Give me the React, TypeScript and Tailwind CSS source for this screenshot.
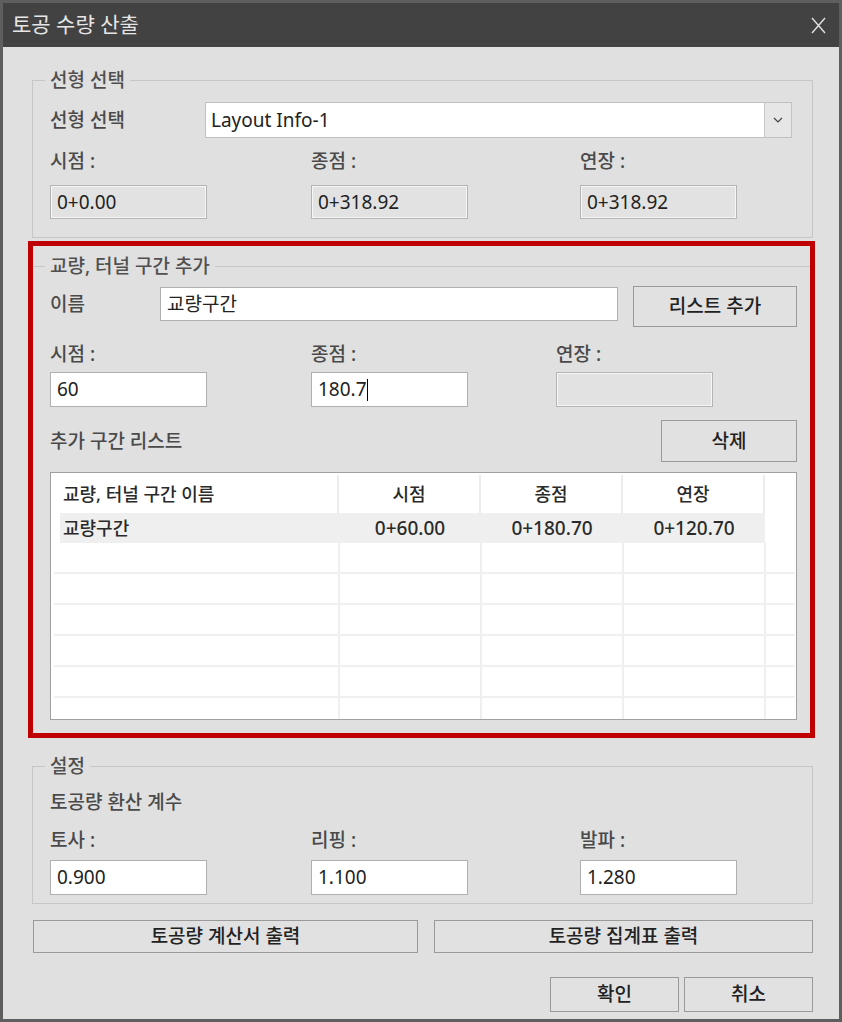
import React from 'react';

const labelCls = 'text-[19px] leading-[22px] font-medium text-[#4a4a4a]';

function Legend({ children }: { children: React.ReactNode }) {
  return <legend className="-ml-[5px] px-[5px] text-[19px] leading-[22px] font-medium text-[#505050]">{children}</legend>;
}

function Box({ value, readOnly, w = 'w-[157px]', h = 'h-[35px]', caret }: { value: string; readOnly?: boolean; w?: string; h?: string; caret?: boolean }) {
  return (
    <div
      className={`${w} ${h} flex items-center pl-[6px] text-[19px] text-[#222222] border ${
        readOnly
          ? 'bg-[#e2e2e2] border-[#b4b4b4] shadow-[inset_0_0_0_1px_#f6f6f6]'
          : 'bg-white border-[#b0b0b0]'
      }`}
    >
      <span>{value}</span>
      {caret && <span className="w-px h-[22px] bg-black" />}
    </div>
  );
}

function Btn({ children, w, h }: { children: React.ReactNode; w: string; h: string }) {
  return (
    <button className={`${w} ${h} flex items-center justify-center bg-[#e1e1e1] border border-[#9a9a9a] text-[19px] font-medium text-[#222222]`}>
      {children}
    </button>
  );
}

const emptyRows = [0, 1, 2, 3, 4, 5];

export default function App() {
  return (
    <div className="w-[842px] h-[1022px] border-[3px] border-[#5e5e5e] bg-[#e0e0e0] flex flex-col font-['Noto_Sans','Noto_Sans_CJK_KR',sans-serif]">
      {/* title bar */}
      <div className="h-[44px] bg-[#424242] flex items-center justify-between pl-[9px] pr-[13px] shrink-0">
        <span className="text-[21px] text-[#e6e6e6]">토공 수량 산출</span>
        <svg width="15" height="17" viewBox="0 0 15 17">
          <path d="M1 1L14 16M14 1L1 16" stroke="#e0e0e0" strokeWidth="1.4" fill="none" />
        </svg>
      </div>

      {/* 선형 선택 */}
      <fieldset className="mt-[22px] ml-[29px] mr-[26px] border border-[#c6c6c6] px-[17px] pb-[18px]">
        <Legend>선형 선택</Legend>
        <div className="mt-[11px] flex items-center">
          <span className={`${labelCls} w-[155px]`}>선형 선택</span>
          <div className="w-[587px] h-[36px] flex border border-[#c2c2c2] bg-white">
            <div className="flex-1 flex items-center pl-[5px] text-[19px] text-[#222222]">Layout Info-1</div>
            <div className="w-[27px] bg-[#e6e6e6] border-l border-[#c8c8c8] flex items-center justify-center">
              <svg width="10" height="6" viewBox="0 0 10 6">
                <path d="M1 1l4 4 4-4" stroke="#444" strokeWidth="1.2" fill="none" />
              </svg>
            </div>
          </div>
        </div>
        <div className="mt-[12px] flex">
          <span className={`${labelCls} w-[261px]`}>시점 :</span>
          <span className={`${labelCls} w-[269px]`}>종점 :</span>
          <span className={labelCls}>연장 :</span>
        </div>
        <div className="mt-[13px] flex">
          <div className="w-[261px]"><Box value="0+0.00" readOnly h="h-[34px]" /></div>
          <div className="w-[269px]"><Box value="0+318.92" readOnly h="h-[34px]" /></div>
          <Box value="0+318.92" readOnly h="h-[34px]" />
        </div>
      </fieldset>

      {/* 교량, 터널 구간 추가 */}
      <div className="mt-[3px] ml-[25px] mr-[24px] border-[5px] border-[#c00000] pt-[9px] pb-[13px]">
        <fieldset className="border-t border-[#c6c6c6] pl-[17px] pr-[13px]">
          <Legend>교량, 터널 구간 추가</Legend>
          <div className="mt-[9px] flex items-start">
            <div className={`${labelCls} w-[110px] h-[36px] flex items-center`}>이름</div>
            <div className="mt-px">
              <Box value="교량구간" w="w-[458px]" h="h-[34px]" />
            </div>
            <div className="ml-[15px]">
              <Btn w="w-[164px]" h="h-[41px]">리스트 추가</Btn>
            </div>
          </div>
          <div className="mt-[16px] flex">
            <span className={`${labelCls} w-[261px]`}>시점 :</span>
            <span className={`${labelCls} w-[245px]`}>종점 :</span>
            <span className={labelCls}>연장 :</span>
          </div>
          <div className="mt-[7px] flex">
            <div className="w-[261px]"><Box value="60" /></div>
            <div className="w-[245px]"><Box value="180.7" caret /></div>
            <Box value="" readOnly />
          </div>
          <div className="mt-[13px] flex items-center justify-between">
            <span className={labelCls}>추가 구간 리스트</span>
            <Btn w="w-[136px]" h="h-[42px]">삭제</Btn>
          </div>
          <div className="mt-[10px] h-[248px] border border-[#a0a0a0] bg-white pt-[2px] pl-[3px] overflow-hidden text-[18px] font-medium text-[#2a2a2a]">
            <div className="flex h-[38px]">
              <div className="w-[285px] pl-[9px] flex items-center border-r-2 border-[#ececec]">교량, 터널 구간 이름</div>
              <div className="w-[142px] flex items-center justify-center border-r-2 border-[#ececec]">시점</div>
              <div className="w-[142px] flex items-center justify-center border-r-2 border-[#ececec]">종점</div>
              <div className="w-[142px] flex items-center justify-center border-r-2 border-[#ececec]">연장</div>
            </div>
            <div className="flex h-[30px] text-[19px]">
              <div className="w-[285px] pl-[6px]">
                <div className="h-full bg-[#efefef] pl-[3px] flex items-center text-[18px]">교량구간</div>
              </div>
              <div className="w-[142px] bg-[#efefef] flex items-center justify-center">0+60.00</div>
              <div className="w-[142px] bg-[#efefef] flex items-center justify-center">0+180.70</div>
              <div className="w-[142px] bg-[#efefef] flex items-center justify-center">0+120.70</div>
            </div>
            {emptyRows.map((r) => (
              <div key={r} className="flex h-[31px] w-[741px] border-b-2 border-[#f0f0f0]">
                <div className="w-[286px] border-r-2 border-[#efefef]" />
                <div className="w-[142px] border-r-2 border-[#efefef]" />
                <div className="w-[142px] border-r-2 border-[#efefef]" />
                <div className="w-[142px] border-r-2 border-[#efefef]" />
              </div>
            ))}
          </div>
        </fieldset>
      </div>

      {/* 설정 */}
      <fieldset className="mt-[17px] ml-[29px] mr-[26px] border border-[#c6c6c6] px-[17px] pb-[8px]">
        <Legend>설정</Legend>
        <div className={`mt-[14px] ${labelCls}`}>토공량 환산 계수</div>
        <div className="mt-[16px] flex">
          <span className={`${labelCls} w-[261px]`}>토사 :</span>
          <span className={`${labelCls} w-[269px]`}>리핑 :</span>
          <span className={labelCls}>발파 :</span>
        </div>
        <div className="mt-[9px] flex">
          <div className="w-[261px]"><Box value="0.900" /></div>
          <div className="w-[269px]"><Box value="1.100" /></div>
          <Box value="1.280" />
        </div>
      </fieldset>

      <div className="mt-[16px] flex">
        <div className="ml-[30px]">
          <Btn w="w-[385px]" h="h-[33px]">토공량 계산서 출력</Btn>
        </div>
        <div className="ml-[16px]">
          <Btn w="w-[379px]" h="h-[33px]">토공량 집계표 출력</Btn>
        </div>
      </div>

      <div className="mt-[24px] mr-[26px] flex justify-end gap-[5px]">
        <Btn w="w-[129px]" h="h-[35px]">확인</Btn>
        <Btn w="w-[129px]" h="h-[35px]">취소</Btn>
      </div>
    </div>
  );
}
